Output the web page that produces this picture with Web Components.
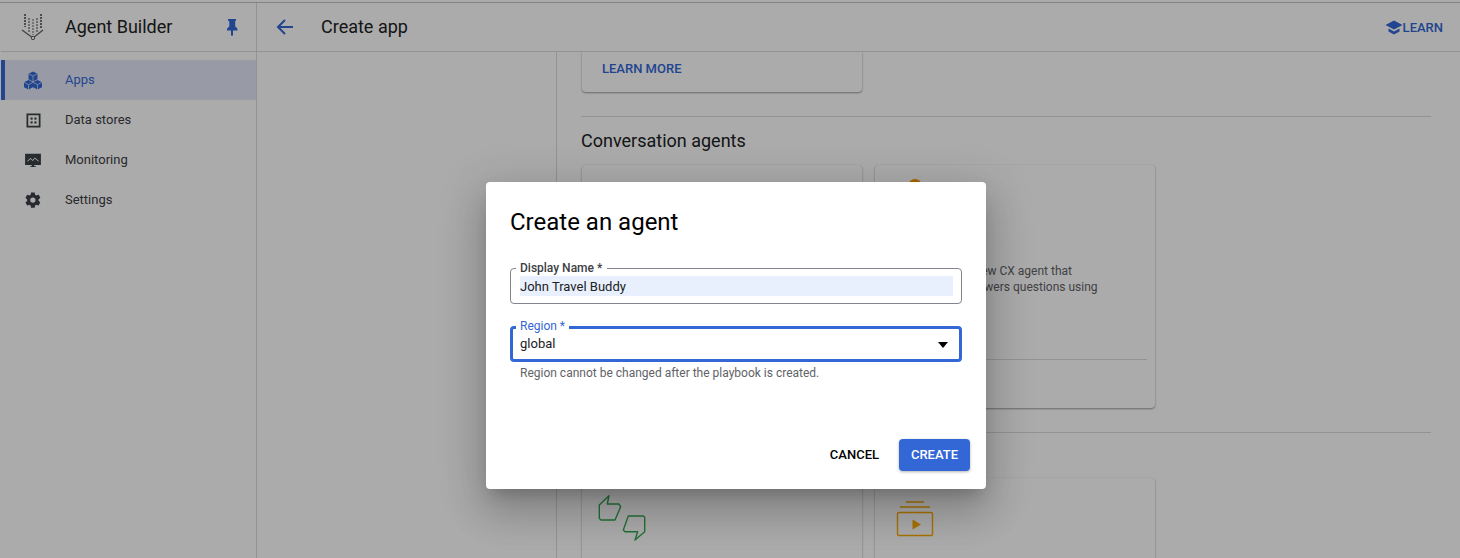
<!DOCTYPE html>
<html>
<head>
<meta charset="utf-8">
<title>Create an agent</title>
<style>
html, body { margin: 0; height: 100%; overflow: hidden; }
body { font-family: Roboto, "Liberation Sans", sans-serif; color: #202124; background: #fff; }
</style>
</head>
<body>
<app-shell>
  <side-nav slot="nav">
    <nav-item label="Apps" icon="apps" active></nav-item>
    <nav-item label="Data stores" icon="stores"></nav-item>
    <nav-item label="Monitoring" icon="monitoring"></nav-item>
    <nav-item label="Settings" icon="settings"></nav-item>
  </side-nav>
  <top-bar slot="top"></top-bar>
  <create-app slot="main"></create-app>
  <agent-dialog slot="dialog"></agent-dialog>
</app-shell>

<script>
const ICONS = {
  apps: { size: 24, d: '<path d="M12 3.500l4.500 2.300v5.400L12 13.500l-4.500-2.300V5.800z"/><path d="M7.500 12l4.500 2.300v4.900l-4.500 2.300L3 19.200v-4.900z"/><path d="M16.500 12l4.500 2.300v4.900l-4.500 2.300-4.500-2.300v-4.900z"/><path d="M7.500 5.800l4.500 2.300 4.500-2.300M12 8.100v5.400M3 14.300l4.500 2.300 4.500-2.300 4.500 2.300 4.500-2.300M7.500 16.600v4.900M16.500 16.600v4.900" stroke="#e3e8f8" stroke-width=".7" fill="none"/>' },
  stores: { size: 21, d: '<path fill-rule="evenodd" d="M4 4h16v16H4zM6 6v12h12V6z"/><rect x="8.600" y="8.600" width="2.400" height="2.400"/><rect x="13" y="8.600" width="2.400" height="2.400"/><rect x="8.600" y="13" width="2.400" height="2.400"/><rect x="13" y="13" width="2.400" height="2.400"/>' },
  monitoring: { size: 20, d: '<path fill-rule="evenodd" d="M2.500 4.500h19v13.500h-8v1.500h2v1h-7v-1h2V18h-8zM5 13.200l4-3.700 2.600 2.400 2.600-3 4.800 4.300-.7.700-4.100-3.600-2.500 3-2.700-2.500-3.300 3z"/>' },
  settings: { size: 18, d: '<path d="M19.400 13c.04-.33.060-.66.060-1s-.02-.67-.07-1l2.150-1.680c.19-.15.240-.42.120-.64l-2.040-3.530c-.12-.22-.38-.3-.61-.22l-2.540 1.020c-.53-.4-1.100-.74-1.720-1l-.38-2.700A.5.500 0 0 0 13.870 2H9.800c-.25 0-.46.18-.5.420l-.38 2.700c-.62.26-1.190.6-1.720 1L4.660 5.100c-.23-.09-.49 0-.61.220L2.010 8.850c-.13.220-.07.490.120.640L4.280 11.170c-.05.33-.08.670-.08 1s.02.67.07 1L2.120 14.850c-.19.150-.24.420-.12.640l2.040 3.530c.12.220.38.3.61.220l2.540-1.020c.53.4 1.100.74 1.720 1l.38 2.700c.04.240.25.420.5.420h4.080c.25 0 .46-.18.500-.42l.38-2.700c.62-.26 1.190-.6 1.720-1l2.540 1.020c.23.090.49 0 .61-.22l2.040-3.530c.12-.22.07-.49-.12-.64zM11.830 15.500a3.500 3.500 0 1 1 0-7 3.500 3.500 0 0 1 0 7z"/>' }
}

class AppShell extends HTMLElement {
  constructor() {
    super()
    this.attachShadow({ mode: "open" }).innerHTML = `
      <style>
        :host { display: grid; grid-template-columns: 257px 1fr; grid-template-rows: 1fr; height: 558px; padding-top: 3px; box-sizing: border-box; position: relative; overflow: hidden; background: #fff; }
        :host::before { content: ""; position: absolute; left: 0; right: 0; top: 2px; height: 1px; background: #c4c4c4; }
        .side { grid-column: 1; border-right: 1px solid #dadce0; margin-left: 1px; min-height: 0; }
        .right { grid-column: 2; display: flex; flex-direction: column; min-height: 0; }
        .scrim { position: absolute; inset: 0; padding-left: 12px; background: rgba(0,0,0,.33); display: flex; align-items: flex-start; justify-content: center; }
      </style>
      <div class="side"><slot name="nav"></slot></div>
      <div class="right"><slot name="top"></slot><slot name="main"></slot></div>
      <div class="scrim"><slot name="dialog"></slot></div>`
  }
}

class SideNav extends HTMLElement {
  constructor() {
    super()
    this.attachShadow({ mode: "open" }).innerHTML = `
      <style>
        :host { display: block; }
        header { height: 48px; border-bottom: 1px solid #dadce0; display: flex; align-items: center; }
        .logo { width: 24px; height: 26px; margin-left: 20px; flex: none; }
        h1 { margin: 0 0 0 20px; padding-bottom: 2px; font: 400 18px Roboto, sans-serif; color: #202124; flex: 1; white-space: nowrap; }
        .pin { width: 16px; height: 18px; margin-right: 16px; fill: #3367d6; }
        .list { padding-top: 8px; display: flex; flex-direction: column; }
      </style>
      <header>
        <svg class="logo" viewBox="0 0 24 26">
          <g fill="none" stroke="#5f6368" stroke-width="2" stroke-dasharray="2 1">
            <path d="M4 0v13" opacity=".9"/><path d="M8 4v14" opacity=".6"/>
            <path d="M12 5v16" opacity=".5"/><path d="M16 4v14" opacity=".6"/><path d="M20 0v14" opacity=".9"/>
          </g>
          <path d="M1 16l11 8 10-8" fill="none" stroke="#5f6368" stroke-width="1.300"/>
          <circle cx="12" cy="24" r="1.700" fill="#fff" stroke="#5f6368"/>
        </svg>
        <h1>Agent Builder</h1>
        <svg class="pin" viewBox="0 0 16 18"><path d="M4 1h8v1.500l-.8.700v5l2.300 2.600v1.700H9v4.700L8 18l-1-.8v-4.700H3v-1.700l2.300-2.600v-5L4 2.500z"/></svg>
      </header>
      <div class="list"><slot></slot></div>`
  }
}

class NavItem extends HTMLElement {
  constructor() {
    super()
    this.attachShadow({ mode: "open" })
  }
  connectedCallback() {
    const icon = ICONS[this.getAttribute("icon")]
    this.shadowRoot.innerHTML = `
      <style>
        :host { display: flex; align-items: center; height: 40px; font: 400 13px Roboto, sans-serif; color: #3c4043; box-sizing: border-box; padding-left: 20px; }
        :host([active]) { color: #3367d6; border-left: 4px solid #3367d6; padding-left: 16px; background: #e3e8f8; }
        .ico { width: 24px; height: 24px; flex: none; display: flex; align-items: center; justify-content: center; }
        svg { fill: #3c4043; }
        :host([active]) svg { fill: #3367d6; }
        span { margin-left: 20px; padding-bottom: 2px; }
      </style>
      <div class="ico"><svg width="${icon.size}" height="${icon.size}" viewBox="0 0 24 24">${icon.d}</svg></div>
      <span>${this.getAttribute("label")}</span>`
  }
}

class TopBar extends HTMLElement {
  constructor() {
    super()
    this.attachShadow({ mode: "open" }).innerHTML = `
      <style>
        :host { display: flex; align-items: center; height: 48px; border-bottom: 1px solid #dadce0; flex: none; padding: 0 17px 0 16px; }
        svg.back { width: 24px; height: 24px; stroke: #3367d6; fill: none; stroke-width: 2; }
        h2 { margin: 0 0 0 24px; padding-bottom: 2px; font: 400 18px Roboto, sans-serif; color: #202124; flex: 1; }
        .learn { display: flex; align-items: center; font: 500 13px Roboto, sans-serif; color: #3367d6; }
        .learn svg { width: 18px; height: 18px; fill: #3367d6; margin-top: -1px; }
      </style>
      <svg class="back" viewBox="0 0 24 24"><path d="M20 12H5M12 5l-7 7 7 7"/></svg>
      <h2>Create app</h2>
      <div class="learn">
        <svg viewBox="0 0 18 18"><path d="M9 2.500L.5 7 9 11.500 17.500 7z"/><path d="M3.500 10.500v3L9 16.500l5.500-3v-3L9 13.500z"/></svg>
        <span>LEARN</span>
      </div>`
  }
}

class AgentCard extends HTMLElement {
  constructor() {
    super()
    this.attachShadow({ mode: "open" }).innerHTML = `
      <style>
        :host { display: block; width: 280px; box-sizing: border-box; background: #fff; border-radius: 4px; box-shadow: 0 1px 2px rgba(60,64,67,.5), 0 0 1px rgba(60,64,67,.15); }
      </style>
      <slot></slot>`
  }
}

class CreateApp extends HTMLElement {
  constructor() {
    super()
    this.attachShadow({ mode: "open" }).innerHTML = `
      <style>
        :host { display: block; flex: 1; min-height: 0; overflow: hidden; margin-left: 299px; border-left: 1px solid #dadce0; padding: 0 29px 0 24px; font: 400 13px Roboto, sans-serif; color: #5f6368; }
        .first { height: 40px; margin-left: 1px; padding: 9px 0 0 20px; font-weight: 500; color: #3367d6; border-radius: 0 0 4px 4px; }
        hr { border: 0; border-top: 1px solid #dadce0; margin: 0; }
        .sec1 { margin-top: 24px; }
        h3 { margin: 13px 0 14px; font: 400 18px/21px Roboto, sans-serif; color: #202124; }
        .row { display: flex; gap: 13px; margin-left: 1px; }
        .conv agent-card { height: 243px; }
        .tall { display: flex; flex-direction: column; height: 100%; }
        .gem { margin: 14px 0 0 20px; width: 36px; height: 36px; flex: none; }
        .desc { margin: 48px 0 0 90px; font-size: 12px; line-height: 16px; flex: 1; white-space: nowrap; }
        .foot { border-top: 1px solid #dadce0; margin: 0 8px 48px 8px; }
        .sec2 { margin-top: 24px; }
        .bottom { margin-top: 45px; }
        .bottom agent-card { height: 120px; padding: 16px 20px; }
        .bottom svg { display: block; }
      </style>
      <agent-card class="first">LEARN MORE</agent-card>
      <hr class="sec1">
      <h3>Conversation agents</h3>
      <div class="row conv">
        <agent-card></agent-card>
        <agent-card>
          <div class="tall">
            <svg class="gem" viewBox="0 0 36 36"><circle cx="20" cy="7" r="7" fill="#ff9800"/></svg>
            <div class="desc">a new CX agent that<br>answers questions using</div>
            <div class="foot"></div>
          </div>
        </agent-card>
      </div>
      <hr class="sec2">
      <div class="row bottom">
        <agent-card>
          <svg width="50" height="50" viewBox="0 0 50 50" fill="none" stroke="#34a853" stroke-width="1.400" stroke-linejoin="round" style="margin-left:-4px">
            <path d="M11 1.700L9.300 10h11.500l1.900 2.700L17 26H3l-1.700-1.500V11z"/>
            <path d="M25.300 36L30.300 22h15l1.400 1.300v14.400L37 46l2.700-8.300H27z"/>
          </svg>
        </agent-card>
        <agent-card>
          <svg width="40" height="38" viewBox="0 0 40 38" fill="none" stroke="#f9ab00" stroke-width="1.400" style="margin:6px 0 0 0">
            <path d="M11 2h18M5 7h30"/>
            <rect x="2.500" y="12.500" width="35" height="23" rx="1.500"/>
            <path d="M17.500 19.500l8.500 5-8.500 5z" fill="#f9ab00" stroke="none"/>
          </svg>
        </agent-card>
      </div>`
  }
}

class OutlinedField extends HTMLElement {
  constructor() {
    super()
    this.attachShadow({ mode: "open" }).innerHTML = `
      <style>
        :host { display: block; position: relative; height: 36px; box-sizing: border-box; border: 1px solid #80868b; border-radius: 4px; padding: 7px 8px 0 9px; font: 400 13px/18px Roboto, sans-serif; color: #202124; }
        :host([focused]) { border: 3px solid #3367d6; padding: 4px 6px 0 7px; }
        label { position: absolute; top: -8px; left: 5px; background: #fff; padding: 0 5px 0 4px; font: 500 12px/14px Roboto, sans-serif; color: #3c4043; }
        :host([focused]) label { top: -10px; left: 3px; padding: 0 4px; color: #3367d6; font-weight: 400; }
        .value { display: flex; align-items: center; justify-content: space-between; height: 20px; box-sizing: border-box; padding-top: 1px; }
        :host([filled]) .value { background: #e8f0fe; }
        ::slotted(svg) { width: 24px; height: 24px; margin-right: -2px; flex: none; }
      </style>
      <label></label>
      <div class="value"><slot></slot></div>`
  }
  connectedCallback() {
    this.shadowRoot.querySelector("label").textContent = this.getAttribute("label")
  }
}

class AgentDialog extends HTMLElement {
  constructor() {
    super()
    this.attachShadow({ mode: "open" }).innerHTML = `
      <style>
        :host { width: 500px; height: 307px; box-sizing: border-box; margin-top: 182px; background: #fff; border-radius: 4px; padding: 24px 16px 18px 24px; box-shadow: 0 11px 15px -7px rgba(0,0,0,.2), 0 24px 38px 3px rgba(0,0,0,.14), 0 9px 46px 8px rgba(0,0,0,.12); display: flex; flex-direction: column; font-family: Roboto, sans-serif; }
        h2 { margin: 0; font: 400 24px/32px Roboto, sans-serif; color: #000; }
        .fields { margin-top: 30px; margin-right: 8px; flex: 1; display: flex; flex-direction: column; gap: 22px; }
        .hint { margin: 4px 0 0 10px; font: 400 12px/14px Roboto, sans-serif; color: #5f6368; }
        .actions { display: flex; justify-content: flex-end; align-items: center; gap: 20px; }
        button { font: 500 13px Roboto, sans-serif; height: 32px; border: 0; border-radius: 4px; background: none; color: #000; padding: 0 0 1px; }
        .primary { width: 71px; background: #3367d6; color: #fff; box-shadow: 0 1px 3px rgba(60,64,67,.4); }
      </style>
      <h2>Create an agent</h2>
      <div class="fields">
        <outlined-field label="Display Name *" filled>John Travel Buddy</outlined-field>
        <div>
          <outlined-field label="Region *" focused>
            <span>global</span>
            <svg viewBox="0 0 24 24"><path d="M7 10h10l-5 6z" fill="#000"/></svg>
          </outlined-field>
          <div class="hint">Region cannot be changed after the playbook is created.</div>
        </div>
      </div>
      <div class="actions">
        <button>CANCEL</button>
        <button class="primary">CREATE</button>
      </div>`
  }
}

customElements.define("app-shell", AppShell)
customElements.define("side-nav", SideNav)
customElements.define("nav-item", NavItem)
customElements.define("top-bar", TopBar)
customElements.define("agent-card", AgentCard)
customElements.define("create-app", CreateApp)
customElements.define("outlined-field", OutlinedField)
customElements.define("agent-dialog", AgentDialog)
</script>
</body>
</html>
